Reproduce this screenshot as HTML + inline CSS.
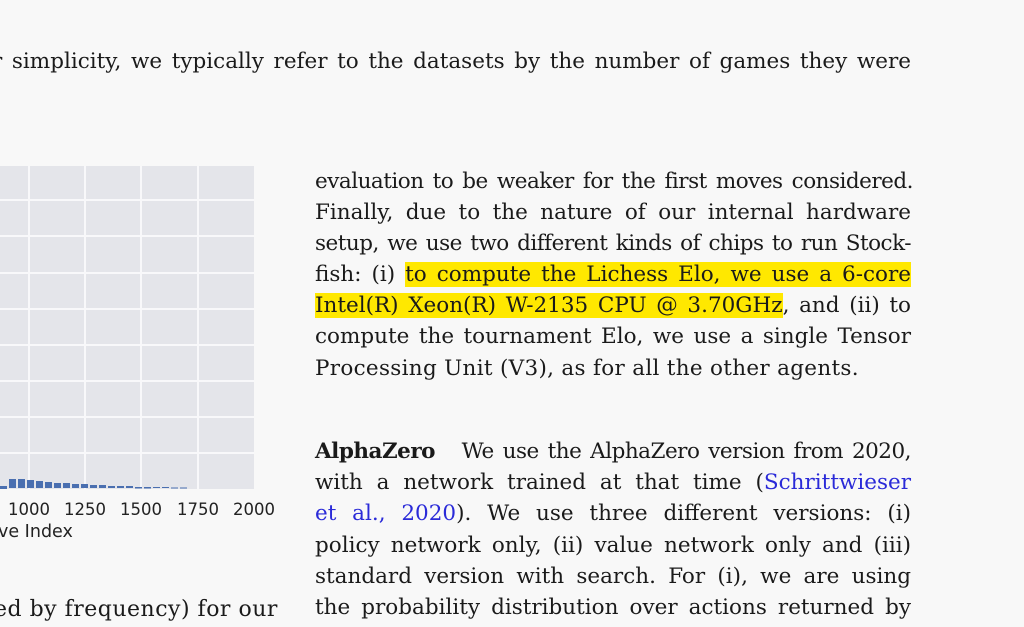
<!DOCTYPE html>
<html><head><meta charset="utf-8"><style>
body{margin:0;width:1024px;height:627px;background:#f8f8f8;overflow:hidden;position:relative;font-family:"DejaVu Serif","Liberation Serif",serif;color:#1a1a1a}
.l{position:absolute;font-size:21.5px;line-height:31px;white-space:nowrap}
.j{text-align:justify;text-align-last:justify;white-space:normal;height:31px;overflow:visible}
.n{letter-spacing:-0.5px}
.hl{background:#ffe800}
.a{color:#2a2ad8}
.plot{position:absolute;left:0;top:166px;width:254px;height:323px;background:#e4e5ea}
.v{position:absolute;top:0;width:2px;height:323px;background:#f8f8fa}
.h{position:absolute;left:0;width:254px;height:2px;background:#f8f8fa}
.t{position:absolute;font-family:"DejaVu Sans",sans-serif;font-size:16.5px;color:#222}
</style></head><body>
<div class="l j" style="left:-8px;top:46px;width:919px">r simplicity, we typically refer to the datasets by the number of games they were</div>

<div class="plot">
<div class="v" style="left:28px"></div><div class="v" style="left:84px"></div><div class="v" style="left:140px"></div><div class="v" style="left:197px"></div>
<div class="h" style="top:33px"></div><div class="h" style="top:69px"></div><div class="h" style="top:106px"></div><div class="h" style="top:142px"></div><div class="h" style="top:178px"></div><div class="h" style="top:214px"></div><div class="h" style="top:250px"></div><div class="h" style="top:286px"></div>
<svg style="position:absolute;left:0;top:312px" width="200" height="11">
<g fill="#4a6fb0">
<rect x="0" y="8" width="7" height="8"/><rect x="9" y="1" width="7" height="9"/><rect x="18" y="1" width="7" height="9"/><rect x="27" y="2" width="7" height="8"/><rect x="36" y="3" width="7" height="7"/><rect x="45" y="4" width="7" height="6"/><rect x="54" y="5" width="7" height="5"/><rect x="63" y="5" width="7" height="5"/><rect x="72" y="6" width="7" height="4"/><rect x="81" y="6" width="7" height="4"/><rect x="90" y="7" width="7" height="3"/><rect x="99" y="7" width="7" height="3"/><rect x="108" y="8" width="7" height="2"/><rect x="117" y="8" width="7" height="2"/><rect x="126" y="8" width="7" height="2"/><rect x="135" y="9" width="7" height="1.5"/><rect x="144" y="9" width="7" height="1.5"/><rect x="153" y="9" width="7" height="1"/><rect x="162" y="9" width="7" height="1"/><rect x="171" y="9.5" width="7" height="1"/><rect x="180" y="9.5" width="7" height="1"/>
</g></svg>
</div>
<div class="t" style="left:8px;top:500px">1000</div>
<div class="t" style="left:64px;top:500px">1250</div>
<div class="t" style="left:120px;top:500px">1500</div>
<div class="t" style="left:177px;top:500px">1750</div>
<div class="t" style="left:233px;top:500px">2000</div>
<div class="t" style="left:-2px;top:522px;font-size:17.5px">ve Index</div>
<div class="l" style="left:-6px;top:594px;font-size:22px;letter-spacing:0.5px">ed by frequency) for our</div>

<div class="l j n" style="left:315px;top:166px;width:598px">evaluation to be weaker for the first moves considered.</div>
<div class="l j" style="left:315px;top:197px;width:596px">Finally, due to the nature of our internal hardware</div>
<div class="l j n" style="left:315px;top:228px;width:596px">setup, we use two different kinds of chips to run Stock-</div>
<div class="l j" style="left:315px;top:259px;width:596px">fish: (i) <span class="hl">to compute the Lichess Elo, we use a 6-core</span></div>
<div class="l j" style="left:315px;top:290px;width:596px"><span class="hl">Intel(R) Xeon(R) W-2135 CPU @ 3.70GHz</span>, and (ii) to</div>
<div class="l j" style="left:315px;top:321px;width:596px">compute the tournament Elo, we use a single Tensor</div>
<div class="l" style="left:315px;top:353px;letter-spacing:0.3px">Processing Unit (V3), as for all the other agents.</div>

<div class="l j n" style="left:315px;top:436px;width:596px"><b>AlphaZero</b>&nbsp;&nbsp; We use the AlphaZero version from 2020,</div>
<div class="l j" style="left:315px;top:467px;width:596px">with a network trained at that time (<span class="a">Schrittwieser</span></div>
<div class="l j" style="left:315px;top:498px;width:596px"><span class="a">et al., 2020</span>). We use three different versions: (i)</div>
<div class="l j" style="left:315px;top:530px;width:596px">policy network only, (ii) value network only and (iii)</div>
<div class="l j" style="left:315px;top:561px;width:596px">standard version with search. For (i), we are using</div>
<div class="l j" style="left:315px;top:592px;width:596px">the probability distribution over actions returned by</div>
</body></html>
